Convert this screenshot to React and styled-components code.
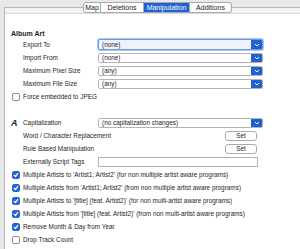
import React from "react";
import styled, { createGlobalStyle } from "styled-components";

const GlobalStyle = createGlobalStyle`
  html, body {
    margin: 0;
    padding: 0;
    background: #e8e8e8;
  }
  * {
    box-sizing: border-box;
  }
`;

const Page = styled.div`
  width: 300px;
  height: 249px;
  overflow: hidden;
  background: #e8e8e8;
  font-family: "Liberation Sans", Arial, sans-serif;
  font-size: 6.4px;
  color: #1e1e1e;
`;

const TabBar = styled.div`
  display: flex;
  padding: 2px 0 0 83px;
  margin-bottom: -6px;
  position: relative;
  z-index: 1;
`;

const Tab = styled.div`
  width: ${({ $w }) => `${$w}px`};
  height: 11px;
  display: flex;
  align-items: center;
  justify-content: center;
  font-size: 7px;
  background: ${({ $active }) => ($active ? "#1f63d1" : "#ffffff")};
  color: ${({ $active }) => ($active ? "#ffffff" : "#222")};
  border: 1px solid #a9a9a9;
  border-left: ${({ $first }) => ($first ? "1px solid #a9a9a9" : "none")};
  border-radius: ${({ $first, $last }) =>
    $first ? "3px 0 0 3px" : $last ? "0 3px 3px 0" : "0"};
`;

const Panel = styled.div`
  margin-left: 4px;
  width: 320px;
  height: 260px;
  border: 1px solid #b8b8b8;
  border-right: none;
  background: #ffffff;
  display: flex;
  flex-direction: column;
`;

const PanelTop = styled.div`
  height: 6px;
  background: #f2f2f2;
  border-bottom: 1px solid #dadada;
`;

const Content = styled.div`
  padding: 14px 0 0 6px;
  display: flex;
  flex-direction: column;
`;

const Heading = styled.div`
  font-weight: bold;
  font-size: 7px;
  height: 10px;
  display: flex;
  align-items: center;
`;

const Row = styled.div`
  height: 13px;
  display: grid;
  grid-template-columns: ${({ $indent }) => `${75 + $indent}px`} auto;
  padding-left: ${({ $indent }) => `${12 - $indent}px`};
  align-items: center;
  margin-top: ${({ $gap }) => ($gap ? `${$gap}px` : "0")};
`;

const Label = styled.div`
  display: flex;
  align-items: center;
  gap: 4px;
  white-space: nowrap;
`;

const CapIcon = styled.span`
  font-weight: bold;
  font-style: italic;
  font-size: 9px;
  width: 8px;
  display: inline-block;
`;

const Select = styled.div`
  width: 165px;
  height: ${({ $focus }) => ($focus ? "11px" : "10px")};
  display: flex;
  align-items: stretch;
  background: #fff;
  border: 1px solid ${({ $focus }) => ($focus ? "#6d9be0" : "#b4b4b4")};
  box-shadow: ${({ $focus }) => ($focus ? "0 0 0 1px #a9c6f2" : "none")};
  border-radius: 2px;
  overflow: hidden;
`;

const SelectText = styled.div`
  flex: 1;
  padding-left: 3px;
  display: flex;
  align-items: center;
  background: ${({ $focus }) => ($focus ? "#eef3fb" : "#fff")};
`;

const Arrow = styled.div`
  width: 11px;
  background: #1f62cf;
  display: flex;
  align-items: center;
  justify-content: center;
`;

const SetButton = styled.div`
  justify-self: start;
  margin-left: 127px;
  width: 32px;
  height: 10px;
  border: 1px solid #aaaaaa;
  border-radius: 3px;
  background: #fff;
  display: flex;
  align-items: center;
  justify-content: center;
`;

const TextField = styled.div`
  width: 160px;
  height: 10px;
  border: 1px solid #b4b4b4;
  background: #fff;
`;

const CheckRow = styled.div`
  height: 13px;
  display: flex;
  align-items: center;
  gap: 3px;
  padding-left: 1px;
  white-space: nowrap;
`;

const Box = styled.span`
  width: 8px;
  height: 8px;
  border-radius: 2px;
  flex: none;
  display: flex;
  align-items: center;
  justify-content: center;
  background: ${({ $checked }) => ($checked ? "#2566d6" : "#fff")};
  border: 1px solid ${({ $checked }) => ($checked ? "#2566d6" : "#8e8e8e")};
`;

const Chevron = () => (
  <svg width="6" height="4" viewBox="0 0 6 4">
    <path d="M1 1 L3 3 L5 1" fill="none" stroke="#fff" strokeWidth="1" />
  </svg>
);

const Check = () => (
  <svg width="6" height="6" viewBox="0 0 6 6">
    <path d="M1 3 L2.5 4.5 L5 1.2" fill="none" stroke="#fff" strokeWidth="1.2" />
  </svg>
);

const Dropdown = ({ value, focus }) => (
  <Select $focus={focus}>
    <SelectText $focus={focus}>{value}</SelectText>
    <Arrow>
      <Chevron />
    </Arrow>
  </Select>
);

const Checkbox = ({ checked, children }) => (
  <CheckRow>
    <Box $checked={checked}>{checked && <Check />}</Box>
    {children}
  </CheckRow>
);

const tabs = [
  { name: "Map", width: 18 },
  { name: "Deletions", width: 43 },
  { name: "Manipulation", width: 46 },
  { name: "Additions", width: 42 },
];

const artistOptions = [
  "Multiple Artists to 'Artist1; Artist2' (for non multiple artist aware programs)",
  "Multiple Artists from 'Artist1; Artist2' (from non multiple artist aware programs)",
  "Multiple Artists to '[title] (feat. Artist2)' (for non multi-artist aware programs)",
  "Multiple Artists from '[title] (feat. Artist2)' (from non multi-artist aware programs)",
  "Remove Month & Day from Year",
];

const App = () => (
  <Page>
    <GlobalStyle />
    <TabBar>
      {tabs.map((t, i) => (
        <Tab
          key={t.name}
          $w={t.width}
          $first={i === 0}
          $last={i === tabs.length - 1}
          $active={t.name === "Manipulation"}
        >
          {t.name}
        </Tab>
      ))}
    </TabBar>
    <Panel>
      <PanelTop />
      <Content>
        <Heading>Album Art</Heading>
        <Row $indent={0}>
          <Label>Export To</Label>
          <Dropdown value="(none)" focus />
        </Row>
        <Row $indent={0}>
          <Label>Import From</Label>
          <Dropdown value="(none)" />
        </Row>
        <Row $indent={0}>
          <Label>Maximum Pixel Size</Label>
          <Dropdown value="(any)" />
        </Row>
        <Row $indent={0}>
          <Label>Maximum File Size</Label>
          <Dropdown value="(any)" />
        </Row>
        <Checkbox>Force embedded to JPEG</Checkbox>

        <Row $indent={12} $gap={13}>
          <Label>
            <CapIcon>A</CapIcon>Capitalization
          </Label>
          <Dropdown value="(no capitalization changes)" />
        </Row>
        <Row $indent={0}>
          <Label>Word / Character Replacement</Label>
          <SetButton>Set</SetButton>
        </Row>
        <Row $indent={0}>
          <Label>Rule Based Manipulation</Label>
          <SetButton>Set</SetButton>
        </Row>
        <Row $indent={0}>
          <Label>Externally Script Tags</Label>
          <TextField />
        </Row>
        {artistOptions.map((o) => (
          <Checkbox key={o} checked>
            {o}
          </Checkbox>
        ))}
        <Checkbox>Drop Track Count</Checkbox>
      </Content>
    </Panel>
  </Page>
);

export default App;
